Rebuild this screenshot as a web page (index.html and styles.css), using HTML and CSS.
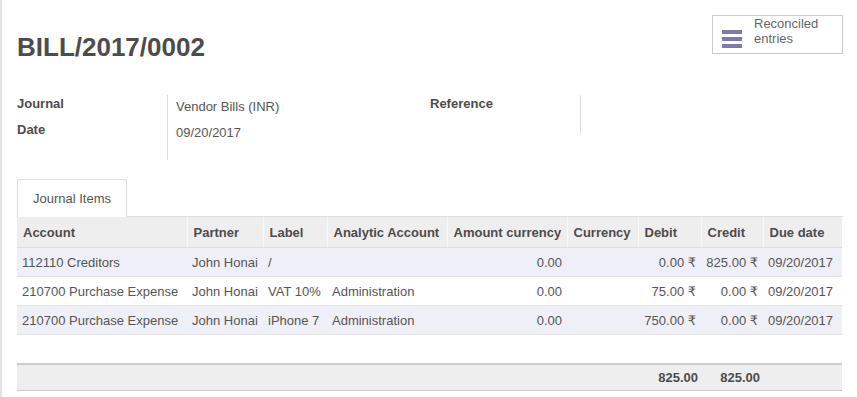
FILE: index.html
```html
<!DOCTYPE html>
<html lang="en">
<head>
    <meta charset="UTF-8">
    <meta name="viewport" content="width=device-width, initial-scale=1.0">
    <title>BILL/2017/0002</title>
    <link rel="stylesheet" href="styles.css">
</head>
<body>
<div class="sheet">
    <div class="sheet-head">
        <h1>BILL/2017/0002</h1>
        <button class="stat-button">
            <span class="stat-icon"><i></i><i></i><i></i></span>
            <span class="stat-text">Reconciled<br>entries</span>
        </button>
    </div>

    <div class="info">
        <div class="info-group">
            <div class="info-label">Journal</div>
            <div class="info-value">Vendor Bills (INR)</div>
            <div class="info-label">Date</div>
            <div class="info-value">09/20/2017</div>
        </div>
        <div class="info-group short">
            <div class="info-label">Reference</div>
            <div class="info-value"></div>
        </div>
    </div>

    <div class="tabs">
        <div class="tab active">Journal Items</div>
    </div>

    <table class="items">
        <colgroup>
            <col class="c-account">
            <col class="c-partner">
            <col class="c-label">
            <col class="c-analytic">
            <col class="c-amount">
            <col class="c-currency">
            <col class="c-debit">
            <col class="c-credit">
            <col class="c-due">
        </colgroup>
        <thead>
            <tr>
                <th>Account</th>
                <th>Partner</th>
                <th>Label</th>
                <th>Analytic Account</th>
                <th>Amount currency</th>
                <th>Currency</th>
                <th>Debit</th>
                <th>Credit</th>
                <th>Due date</th>
            </tr>
        </thead>
        <tbody>
            <tr class="odd">
                <td>112110 Creditors</td>
                <td>John Honai</td>
                <td>/</td>
                <td></td>
                <td class="num">0.00</td>
                <td></td>
                <td class="num">0.00 ₹</td>
                <td class="num">825.00 ₹</td>
                <td>09/20/2017</td>
            </tr>
            <tr>
                <td>210700 Purchase Expense</td>
                <td>John Honai</td>
                <td>VAT 10%</td>
                <td>Administration</td>
                <td class="num">0.00</td>
                <td></td>
                <td class="num">75.00 ₹</td>
                <td class="num">0.00 ₹</td>
                <td>09/20/2017</td>
            </tr>
            <tr class="odd">
                <td>210700 Purchase Expense</td>
                <td>John Honai</td>
                <td>iPhone 7</td>
                <td>Administration</td>
                <td class="num">0.00</td>
                <td></td>
                <td class="num">750.00 ₹</td>
                <td class="num">0.00 ₹</td>
                <td>09/20/2017</td>
            </tr>
            <tr class="empty">
                <td colspan="9"></td>
            </tr>
        </tbody>
        <tfoot>
            <tr>
                <td></td>
                <td></td>
                <td></td>
                <td></td>
                <td></td>
                <td></td>
                <td class="num">825.00</td>
                <td class="num">825.00</td>
                <td></td>
            </tr>
        </tfoot>
    </table>
</div>
</body>
</html>
```

FILE: styles.css
```css
body {
    margin: 0;
    font-family: "Liberation Sans", Arial, "DejaVu Sans", sans-serif;
    font-size: 13px;
    color: #4c4c4c;
    background-color: #fff;
    border-left: 2px solid #e4e4e4;
    min-height: 397px;
    box-sizing: border-box;
}
.sheet {
    padding: 0 14px 0 15px;
}
.sheet-head {
    display: flex;
    justify-content: space-between;
    align-items: flex-start;
}
h1 {
    margin: 32px 0 0 0;
    font-size: 26px;
    line-height: 31px;
    font-weight: bold;
    color: #4c4c4c;
}
.stat-button {
    margin-top: 15px;
    width: 131px;
    height: 39px;
    display: flex;
    align-items: center;
    gap: 12px;
    padding: 0 0 0 9px;
    background-color: #fff;
    border: 1px solid #ccc;
    font-family: inherit;
    font-size: 13px;
    color: #666;
    text-align: left;
    cursor: pointer;
}
.stat-icon {
    display: flex;
    flex-direction: column;
    gap: 3px;
    margin-top: 8px;
}
.stat-icon i {
    display: block;
    width: 20px;
    height: 4px;
    background-color: #7c7bad;
}
.stat-text {
    line-height: 15px;
    align-self: flex-start;
    margin-top: 0;
}
.info {
    display: flex;
    gap: 17px;
    margin-top: 31px;
}
.info-group {
    display: grid;
    grid-template-columns: 150px 246px;
    grid-auto-rows: 27px;
}
.info-group.short {
    grid-template-columns: 150px 1px;
    grid-auto-rows: 30px;
}
.info-label {
    font-weight: bold;
    padding-top: 2px;
    line-height: 13px;
}
.info-value {
    border-left: 1px solid #ddd;
    padding: 5px 0 0 8px;
    line-height: 13px;
    color: #555;
}
.info-group .info-label:nth-child(1),
.info-group .info-value:nth-child(2) {
    margin-top: 1px;
}
.info-group .info-value:last-child {
    height: 34px;
}
.tabs {
    display: flex;
    margin-top: 31px;
    border-bottom: 1px solid #ddd;
}
.tab {
    padding: 0 15px;
    height: 37px;
    line-height: 37px;
    border: 1px solid #ddd;
    border-bottom: none;
    border-radius: 3px 3px 0 0;
    color: #555;
    margin-bottom: -1px;
    background-color: #fff;
}
.items {
    width: 825px;
    border-collapse: collapse;
    table-layout: fixed;
}
.c-account { width: 170px; }
.c-partner { width: 76px; }
.c-label { width: 64px; }
.c-analytic { width: 120px; }
.c-amount { width: 120px; }
.c-currency { width: 71px; }
.c-debit { width: 63px; }
.c-credit { width: 62px; }
.c-due { width: 79px; }
.items th {
    background-color: #eee;
    height: 30px;
    padding: 0 6px;
    text-align: left;
    font-weight: bold;
    white-space: nowrap;
    border-left: 1px solid #f9f9f9;
    border-bottom: 1px solid #ddd;
    color: #4c4c4c;
}
.items th:first-child {
    border-left: none;
}
.items td {
    height: 28px;
    padding: 0 5px;
    white-space: nowrap;
    border-bottom: 1px solid #e2e2e2;
    color: #555;
}
.items td.num {
    text-align: right;
}
.items tr.odd td {
    background-color: #efeff7;
}
.items tr.empty td {
    height: 28px;
    border-bottom: none;
}
.items tfoot td {
    background-color: #eee;
    height: 25px;
    font-weight: bold;
    color: #4c4c4c;
    border-top: 2px solid #ccc;
    border-bottom: 1px solid #ccc;
}
.items tfoot td.num {
    padding-right: 3px;
}
```
